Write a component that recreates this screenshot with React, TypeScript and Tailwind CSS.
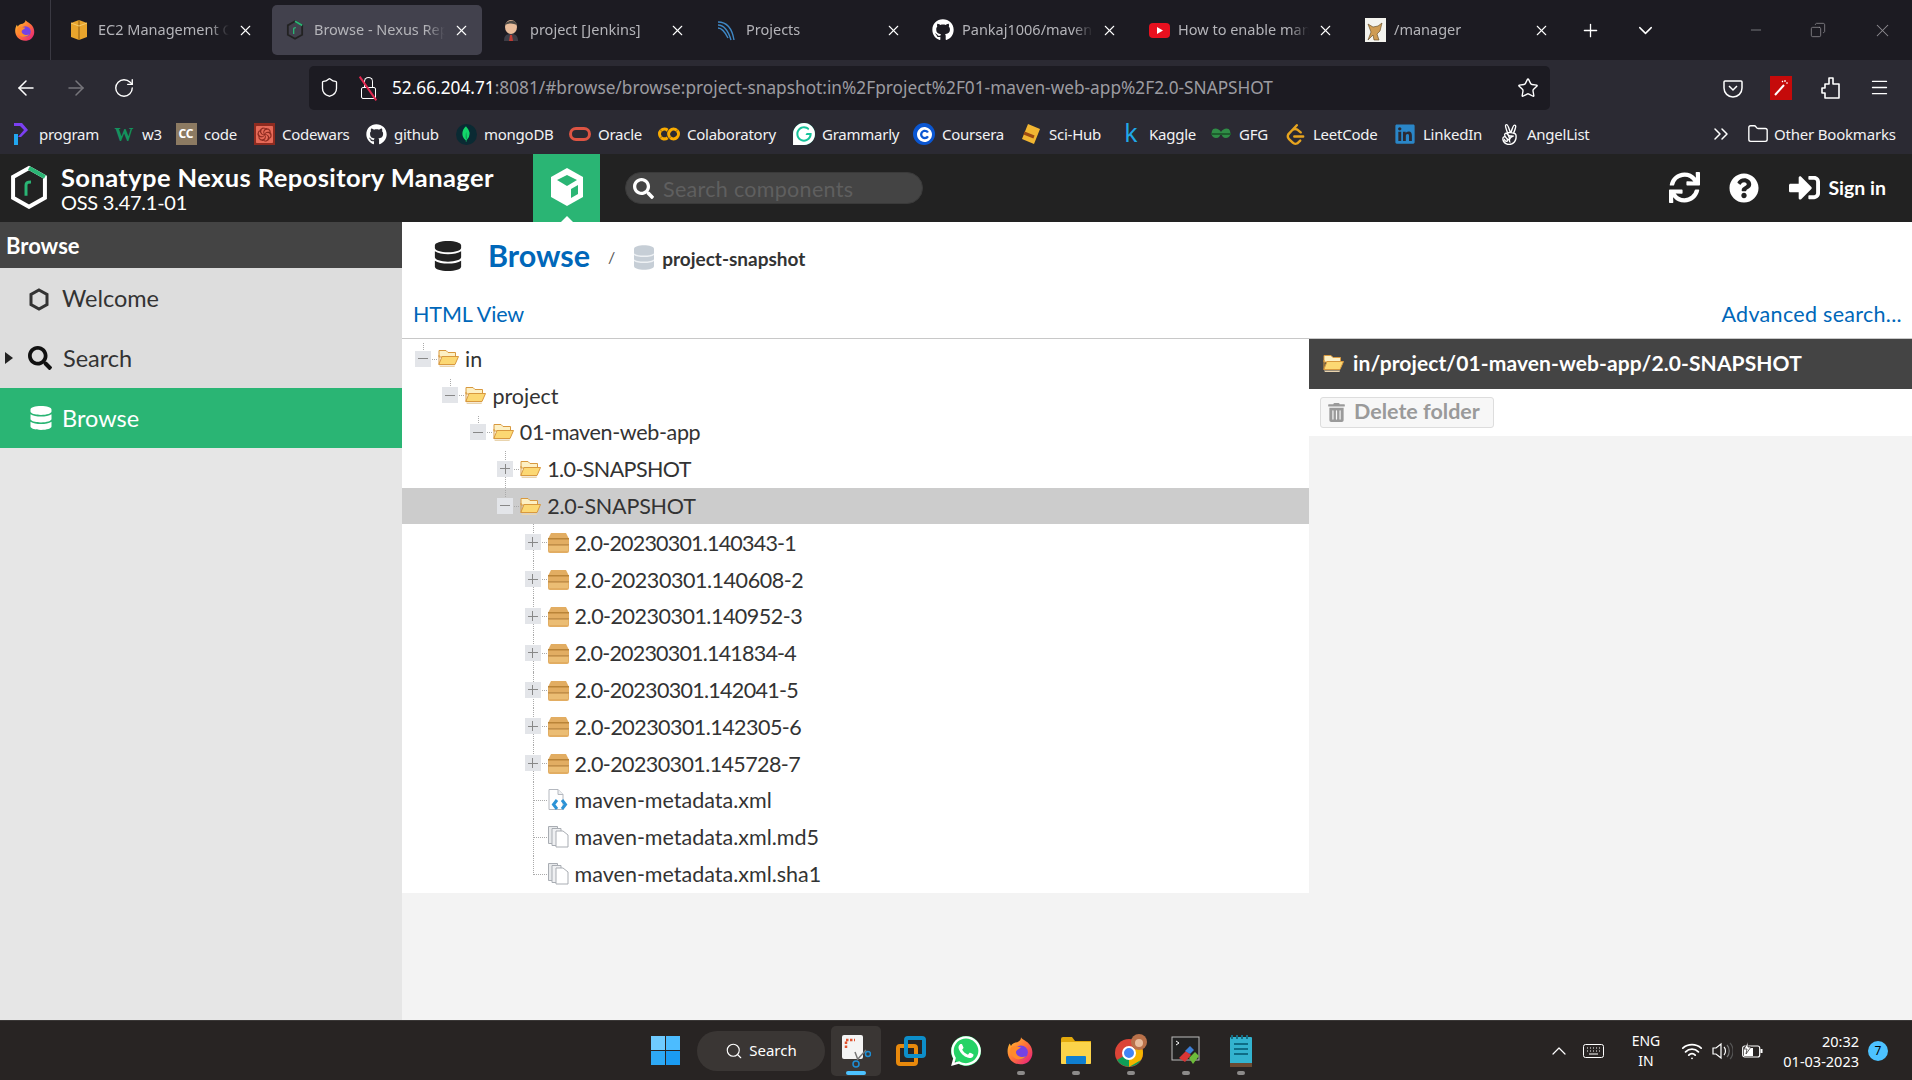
import React from 'react';
import {
  ArrowLeft, ArrowRight, RotateCw, Shield, Star, Menu, X, Plus, ChevronDown, Minus, Copy,
  ChevronsRight, Folder, Search as SearchIcon, ChevronUp, Wifi,
} from 'lucide-react';
import { FaDatabase, FaSync, FaQuestionCircle, FaSignInAlt, FaSearch, FaTrashAlt, FaGithub, FaLinkedin, FaAngellist, FaWhatsapp } from 'react-icons/fa';
import { SiMongodb, SiCoursera, SiLeetcode, SiGrammarly, SiCodewars, SiGooglecolab } from 'react-icons/si';

const uiFont = 'font-["Noto_Sans",sans-serif]';
const nxFont = 'font-["Lato",sans-serif]';

const NexusHex = ({ size = 24, stroke = '#fff', accent = '#2ab574' }: { size?: number; stroke?: string; accent?: string }) => (
  <svg width={size} height={size * 1.12} viewBox="0 0 40 45" fill="none">
    <path d="M20 3 L36 12 V33 L20 42 L4 33 V12 Z" stroke={stroke} strokeWidth="4" />
    <path d="M20 3 L36 12" stroke={accent} strokeWidth="4" />
    <path d="M17 31 V20 Q17 17 22 17" stroke={accent} strokeWidth="3" />
  </svg>
);

const FolderOpen = ({ size = 21 }: { size?: number }) => (
  <svg width={size} height={size} viewBox="0 2.500 21 18">
    <path d="M1 3.500h7l2 2h7.500V10H1z" fill="#fdf0c4" stroke="#d8993f" />
    <path d="M.8 17.500 L4 9.500 H20.500 L17 17.500z" fill="#fcd873" stroke="#d8993f" />
    <path d="M1 17.500V8" stroke="#d8993f" />
    <path d="M1 18.500h16l-.5 1.500H2z" fill="#e9d4ae" />
  </svg>
);

const PackageBox = () => (
  <svg width={21} height={21} viewBox="0 0 21 21">
    <path d="M3 1h15l3 6v12a2 2 0 0 1-2 2H2a2 2 0 0 1-2-2V7z" fill="#e2ad62" />
    <rect x="0" y="6" width="21" height="1.500" fill="#b98438" />
    <rect x="0" y="12" width="21" height="1.500" fill="#c2904a" />
    <rect x="1" y="14" width="19" height="5" fill="#ebbd74" />
  </svg>
);

const DocXml = () => (
  <svg width={21} height={22} viewBox="0 0 21 22">
    <path d="M1 .5h9l5 5v15H1z" fill="#fff" stroke="#b4b8bf" />
    <path d="M10 .5v5h5" fill="#eef0f2" stroke="#b4b8bf" />
    <path d="M9 11 L5.500 15.500 L9 20 M14 11 L17.500 15.500 L14 20" fill="none" stroke="#2d93d6" strokeWidth="3" />
  </svg>
);

const DocCopy = () => (
  <svg width={21} height={22} viewBox="0 0 21 22">
    <path d="M0.5 0.5h9v17h-9z" fill="#e8eaec" stroke="#a9adb3" />
    <path d="M4 2.500h9v17H4z" fill="#eff0f2" stroke="#a9adb3" />
    <path d="M8 5h7l5 4v12H8z" fill="#fff" stroke="#a9adb3" />
  </svg>
);

const FirefoxIcon = ({ size = 22 }: { size?: number }) => (
  <svg width={size} height={size} viewBox="0 0 24 24">
    <defs>
      <linearGradient id="ffg" x1="0" y1="0" x2="1" y2="1">
        <stop offset="0" stopColor="#ffcb2e" />
        <stop offset="0.5" stopColor="#ff7139" />
        <stop offset="1" stopColor="#e31587" />
      </linearGradient>
    </defs>
    <path d="M12 1c1 2 5 3 7 6 3 4 3 10-1 13.500-4 3-10 3-14-1C0 15 1 9 3 6l1 2c1-2 3-3 5-3 2-1 3-2 3-4z" fill="url(#ffg)" />
    <circle cx="12" cy="13" r="5.500" fill="#7542e5" />
    <path d="M4 9c3-2 5 0 8 0-2 2-4 2-4 4 0 3 5 5 8 3-2 3-8 4-11 0-2-2-2-5-1-7z" fill="#ff8a2b" />
  </svg>
);

const tabs = [
  { title: 'EC2 Management C', icon: <svg width={20} height={22} viewBox="0 0 20 22"><path d="M10 1l8 3v14l-8 3-8-3V4z" fill="#e9a52c" /><path d="M10 1v20" stroke="#8a5a12" /><path d="M2 4l8 3 8-3" fill="none" stroke="#f7cc6d" /></svg> },
  { title: 'Browse - Nexus Rep', active: true, icon: <NexusHex size={18} stroke="#222" /> },
  { title: 'project [Jenkins]', icon: <svg width={20} height={22} viewBox="0 0 20 22"><ellipse cx="10" cy="8" rx="6" ry="7" fill="#e9bd9c" /><path d="M4 6c1-5 11-6 12 0-4-2-8-2-12 0z" fill="#4d4a45" /><path d="M3 22c0-6 3-7 7-7s7 1 7 7z" fill="#3d3d46" /><path d="M9 16h2l1 6H8z" fill="#c13b33" /></svg> },
  { title: 'Projects', icon: <svg width={22} height={22} viewBox="0 0 22 22" fill="none" stroke="#3f88c5" strokeWidth="1.400"><path d="M2 3c8 0 14 6 16 18M2 6c6 0 10 5 13 15M2 9c4 0 7 4 10 10" /></svg> },
  { title: 'Pankaj1006/maven-', icon: <FaGithub size={22} className="text-white" /> },
  { title: 'How to enable man', icon: <svg width={21} height={21} viewBox="0 0 21 21"><rect x="0" y="3" width="21" height="15" rx="4" fill="#e8101f" /><path d="M8 7l6 3.500L8 14z" fill="#fff" /></svg> },
  { title: '/manager', icon: <svg width={21} height={24} viewBox="0 0 21 24"><rect width="21" height="24" fill="#f3f3ee" /><path d="M3 6l5 3 5-1 4-3-2 8-3 3 2 6H9l-1-5-5 5 3-8z" fill="#cf9c53" stroke="#5b4420" strokeWidth=".6" /></svg> },
];

const bookmarks = [
  { label: 'program', w: 'w-[103px]', icon: <svg width={18} height={24} viewBox="0 0 18 24"><path d="M2 1h8l6 7-7 7H6l6-7-4-4H2z" fill="#7b3ff2" /><path d="M2 12h4v11H2z" fill="#22a7f0" /></svg> },
  { label: 'w3', w: 'w-[62px]', icon: <span className="font-['Liberation_Serif',serif] text-[19px] font-bold text-[#13925e] leading-none">W</span> },
  { label: 'code', w: 'w-[78px]', icon: <span className="w-[21px] h-[22px] bg-[#8c7a62] text-white text-[12px] font-bold flex items-center justify-center leading-none">CC</span> },
  { label: 'Codewars', w: 'w-[112px]', icon: <span className="w-[21px] h-[22px] bg-[#8e2b20] flex items-center justify-center"><SiCodewars size={17} className="text-[#e66a58]" /></span> },
  { label: 'github', w: 'w-[90px]', icon: <FaGithub size={21} className="text-white" /> },
  { label: 'mongoDB', w: 'w-[114px]', icon: <span className="w-[21px] h-[21px] rounded-full bg-[#0a2a33] flex items-center justify-center"><SiMongodb size={16} className="text-[#13d66a]" /></span> },
  { label: 'Oracle', w: 'w-[89px]', icon: <span className="w-[22px] h-[14px] rounded-full border-[3px] border-[#dd5443]" /> },
  { label: 'Colaboratory', w: 'w-[135px]', icon: <SiGooglecolab size={22} className="text-[#f9ab00]" /> },
  { label: 'Grammarly', w: 'w-[120px]', icon: <span className="w-[22px] h-[22px] rounded-full bg-[#15c39a] flex items-center justify-center"><SiGrammarly size={22} className="text-white" /></span> },
  { label: 'Coursera', w: 'w-[107px]', icon: <span className="w-[22px] h-[22px] rounded-full bg-[#0a56d2] flex items-center justify-center"><SiCoursera size={15} className="text-white" /></span> },
  { label: 'Sci-Hub', w: 'w-[100px]', icon: <svg width={20} height={22} viewBox="0 0 20 22"><path d="M7 1l12 5-6 15L1 16z" fill="#f2b632" /><path d="M3 10l10 4" stroke="#9c4a12" strokeWidth="3" /></svg> },
  { label: 'Kaggle', w: 'w-[90px]', icon: <span className="text-[25px] leading-none text-[#20a8e8] -mt-[4px]">k</span> },
  { label: 'GFG', w: 'w-[74px]', icon: <svg width={20} height={14} viewBox="0 0 20 14" fill="#2f8d46"><path d="M10 5C8 1 2 0 1 4c-1 3 0 7 4 7 3 0 4-2 5-5 1 3 2 5 5 5 4 0 5-4 4-7-1-4-7-3-9 1z" /><path d="M0 6h20v2H0z" fill="#1d5e2d" /></svg> },
  { label: 'LeetCode', w: 'w-[110px]', icon: <SiLeetcode size={21} className="text-[#e7a41f]" /> },
  { label: 'LinkedIn', w: 'w-[104px]', icon: <FaLinkedin size={22} className="text-[#2a86c8]" /> },
  { label: 'AngelList', w: 'w-[211px]', icon: <FaAngellist size={21} className="text-white" /> },
];

type Line = 'top' | 'full' | 'end';
type Kind = 'folder' | 'package' | 'xml' | 'copy';

interface Node { label: string; depth: number; kind: Kind; toggle?: '+' | '-'; line: Line; selected?: boolean; track?: string }

const pkgs = [
  { id: '140343-1', track: 'tracking-[-0.8px]' },
  { id: '140608-2', track: 'tracking-[-0.45px]' },
  { id: '140952-3', track: 'tracking-[-0.5px]' },
  { id: '141834-4', track: 'tracking-[-0.8px]' },
  { id: '142041-5', track: 'tracking-[-0.7px]' },
  { id: '142305-6', track: 'tracking-[-0.55px]' },
  { id: '145728-7', track: 'tracking-[-0.6px]' },
];

const tree: Node[] = [
  { label: 'in', depth: 0, kind: 'folder', toggle: '-', line: 'top' },
  { label: 'project', depth: 1, kind: 'folder', toggle: '-', line: 'top' },
  { label: '01-maven-web-app', depth: 2, kind: 'folder', toggle: '-', line: 'top', track: 'tracking-[-0.35px]' },
  { label: '1.0-SNAPSHOT', depth: 3, kind: 'folder', toggle: '+', line: 'full', track: 'tracking-[-0.6px]' },
  { label: '2.0-SNAPSHOT', depth: 3, kind: 'folder', toggle: '-', line: 'top', selected: true, track: 'tracking-[-0.2px]' },
  ...pkgs.map((p): Node => ({ label: `2.0-20230301.${p.id}`, depth: 4, kind: 'package', toggle: '+', line: 'full', track: p.track })),
  { label: 'maven-metadata.xml', depth: 4, kind: 'xml', line: 'full' },
  { label: 'maven-metadata.xml.md5', depth: 4, kind: 'copy', line: 'full' },
  { label: 'maven-metadata.xml.sha1', depth: 4, kind: 'copy', line: 'end' },
];

const TreeRow = ({ node }: { node: Node }) => (
  <div
    className={`h-[36.8px] flex items-center text-[21.5px] text-[#333] ${node.selected ? 'bg-[#cccccc]' : ''}`}
    style={{ paddingLeft: 13 + 27.4 * node.depth }}
  >
    <div className="relative w-[23px] h-full shrink-0">
      {node.line === 'top' && <div className="absolute left-[8px] top-[2px] h-[9px] border-l border-dotted border-[#aaa]" />}
      {node.line === 'full' && <div className="absolute left-[8px] top-0 bottom-0 border-l border-dotted border-[#aaa]" />}
      {node.line === 'end' && <div className="absolute left-[8px] top-0 h-[19px] border-l border-dotted border-[#aaa]" />}
      <div className="absolute left-[8px] top-[18px] w-[14px] border-t border-dotted border-[#aaa]" />
      {node.toggle && (
        <div className="absolute left-0 top-[10px] w-[16px] h-[16px] bg-[#e3e5e9] flex items-center justify-center">
          <div className="relative w-[10px] h-[10px] flex items-center justify-center">
            <div className="absolute w-[10px] h-[1px] bg-[#888]" />
            {node.toggle === '+' && <div className="absolute w-[1px] h-[10px] bg-[#888]" />}
          </div>
        </div>
      )}
    </div>
    <div className="w-[27px] shrink-0 flex items-center">
      {node.kind === 'folder' && <FolderOpen />}
      {node.kind === 'package' && <PackageBox />}
      {node.kind === 'xml' && <DocXml />}
      {node.kind === 'copy' && <DocCopy />}
    </div>
    <span className={`whitespace-nowrap ${node.track ?? ''}`}>{node.label}</span>
  </div>
);

const TaskIcon = ({ children, dot }: { children: React.ReactNode; dot?: boolean }) => (
  <div className="relative w-[55px] h-[50px] flex items-center justify-center">
    {children}
    {dot && <div className="absolute bottom-[1px] w-[8px] h-[4px] rounded-full bg-[#8d8b8a]" />}
  </div>
);

export default function App() {
  return (
    <div className={`w-[1912px] h-[1080px] overflow-hidden flex flex-col bg-[#f2f2f2] ${uiFont}`}>
      {/* Tab strip */}
      <div className="h-[60px] bg-[#1c1b22] flex items-center shrink-0">
        <div className="w-[51px] h-full flex items-center justify-center border-r border-[#3a3942] shrink-0">
          <FirefoxIcon size={23} />
        </div>
        <div className="w-[5px]" />
        {tabs.map(t => (
          <div
            key={t.title}
            className={`w-[210px] mr-[6px] h-[50px] flex items-center pl-[12px] pr-[12px] gap-[8px] shrink-0 rounded-[5px] ${t.active ? 'bg-[#42414d]' : ''}`}
          >
            <div className="w-[22px] flex justify-center shrink-0">{t.icon}</div>
            <span className="flex-1 overflow-hidden whitespace-nowrap text-[14.5px] text-[#b4b4b9] [mask-image:linear-gradient(to_right,black_85%,transparent)]">{t.title}</span>
            <X size={17} className="text-white shrink-0" strokeWidth={1.5} />
          </div>
        ))}
        <div className="w-[12px]" />
        <Plus size={21} className="text-white shrink-0" strokeWidth={1.5} />
        <div className="w-[33px]" />
        <ChevronDown size={23} className="text-white shrink-0" strokeWidth={1.5} />
        <div className="flex-1" />
        <Minus size={16} className="text-[#8e8d92] shrink-0" strokeWidth={1.2} />
        <div className="w-[46px]" />
        <Copy size={16} className="text-[#8e8d92] shrink-0 -scale-x-100" strokeWidth={1.2} />
        <div className="w-[46px]" />
        <X size={21} className="text-[#8e8d92] shrink-0" strokeWidth={1.2} />
        <div className="w-[19px]" />
      </div>

      {/* Toolbar */}
      <div className="h-[94px] bg-[#2b2a33] shrink-0 flex flex-col">
        <div className="h-[54px] flex items-center pt-[1px]">
          <ArrowLeft size={24} strokeWidth={1.5} className="ml-[14px] text-white shrink-0" />
          <ArrowRight size={24} strokeWidth={1.5} className="ml-[26px] text-[#77767c] shrink-0" />
          <RotateCw size={22} strokeWidth={1.5} className="ml-[25px] text-white shrink-0" />
          <div className="ml-[174px] w-[1241px] h-[44px] bg-[#1c1b22] rounded-[5px] flex items-center pl-[10px] pr-[11px] shrink-0">
            <Shield size={21} strokeWidth={1.5} className="text-white shrink-0" />
            <div className="relative ml-[18px] w-[20px] h-[24px] shrink-0">
              <div className="absolute left-[3px] bottom-[1px] w-[15px] h-[12px] border-[1.5px] border-white rounded-[2px]" />
              <div className="absolute left-[6px] top-[1px] w-[9px] h-[10px] border-[1.5px] border-white rounded-t-full border-b-0" />
              <div className="absolute left-[9px] top-[-2px] w-[2px] h-[29px] bg-[#e22850] -rotate-[35deg]" />
            </div>
            <span className="ml-[14px] text-[17.25px] whitespace-nowrap text-[#9c9ca1]"><span className="text-white">52.66.204.71</span>:8081/#browse/browse:project-snapshot:in%2Fproject%2F01-maven-web-app%2F2.0-SNAPSHOT</span>
            <div className="flex-1" />
            <Star size={22} strokeWidth={1.5} className="text-white shrink-0" />
          </div>
          <svg className="ml-[173px] shrink-0" width={20} height={20} viewBox="0 0 20 20" fill="none" stroke="#fff" strokeWidth="1.500"><path d="M2 3h16a1 1 0 0 1 1 1v6a9 9 0 0 1-18 0V4a1 1 0 0 1 1-1z" /><path d="M6 8l4 4 4-4" /></svg>
          <div className="ml-[27px] w-[22px] h-[24px] bg-[#c50a0a] flex items-center justify-center shrink-0">
            <svg width={16} height={18} viewBox="0 0 16 18" fill="none" stroke="#fff" strokeWidth="2"><path d="M2 16L11 6" /><path d="M12 1v2M15 4h-2M9 2l1 1" strokeWidth="1.200" /></svg>
          </div>
          <svg className="ml-[28px] shrink-0" width={21} height={24} viewBox="0 0 21 24" fill="none" stroke="#fff" strokeWidth="1.600"><path d="M9 2h4v6h6v14H5v-5H2v-5h3V8h4z" strokeLinejoin="round" /></svg>
          <Menu size={21} strokeWidth={1.5} className="ml-[28px] text-white shrink-0" />
        </div>
        {/* Bookmarks */}
        <div className="h-[40px] flex items-center pl-[10px] text-[15px] text-[#f2f2f3]">
          {bookmarks.map(b => (
            <div key={b.label} className={`${b.w} shrink-0 flex items-center gap-[7px] whitespace-nowrap`}>
              <div className="w-[22px] flex justify-center shrink-0">{b.icon}</div>
              <span className="tracking-[-0.25px]">{b.label}</span>
            </div>
          ))}
          <ChevronsRight size={24} strokeWidth={1.5} className="text-white shrink-0" />
          <Folder size={22} strokeWidth={1.5} className="ml-[14px] text-white shrink-0" />
          <span className="ml-[5px] tracking-[-0.2px] whitespace-nowrap">Other Bookmarks</span>
        </div>
      </div>

      {/* Nexus header */}
      <div className={`h-[68px] bg-[#222222] flex items-center shrink-0 ${nxFont}`}>
        <div className="ml-[9px] -mt-[2px] shrink-0"><NexusHex size={40} /></div>
        <div className="ml-[12px] -mt-[3px] w-[472px] shrink-0 text-white">
          <div className="text-[25.5px] font-bold leading-[30px] whitespace-nowrap tracking-[0.4px]">Sonatype Nexus Repository Manager</div>
          <div className="text-[20px] leading-[20px] whitespace-nowrap tracking-[-0.25px]">OSS 3.47.1-01</div>
        </div>
        <div className="relative w-[67px] h-full bg-[#2ab574] flex items-center justify-center shrink-0">
          <svg width={34} height={40} viewBox="0 0 34 40" className="-mt-[3px]"><path d="M17 1l16 9v20L17 39 1 30V10z" fill="#fff" /><path d="M17 19l-10-6 10-5 10 5z" fill="#2ab574" /><path d="M21 22l7-4v9l-7 4z" fill="#2ab574" /></svg>
          <div className="absolute bottom-0 w-0 h-0 border-x-[6px] border-x-transparent border-b-[6px] border-b-white" />
        </div>
        <div className="ml-[25px] w-[298px] h-[32px] rounded-full bg-[#444444] border border-[#3a3a3a] flex items-center pl-[7px] shrink-0">
          <FaSearch size={21} className="text-white shrink-0" />
          <span className="ml-[9px] mt-[3px] text-[21.5px] text-[#5f5f5f] whitespace-nowrap tracking-[0.3px]">Search components</span>
        </div>
        <div className="flex-1" />
        <FaSync size={31} className="text-white shrink-0 -mt-[1px]" />
        <FaQuestionCircle size={30} className="ml-[29px] text-white shrink-0 -mt-[1px]" />
        <FaSignInAlt size={31} className="ml-[30px] text-white shrink-0 -mt-[1px]" />
        <span className="ml-[8px] mr-[26px] text-[19.5px] font-bold text-white whitespace-nowrap -mt-[1px]">Sign in</span>
      </div>

      {/* Body */}
      <div className={`flex-1 flex min-h-0 ${nxFont}`}>
        <div className="w-[402px] shrink-0 bg-[#e6e6e6] flex flex-col">
          <div className="h-[46px] bg-[#444444] text-white font-bold text-[22px] flex items-center pl-[6px]">Browse</div>
          <div className="h-[60px] bg-[#dddddd] flex items-center text-[23.5px] text-[#333]">
            <svg className="ml-[29px] mt-[2px]" width={20} height={23} viewBox="0 0 20 23" fill="none" stroke="#333" strokeWidth="3"><path d="M10 2l8 4.500v10L10 21l-8-4.500v-10z" /></svg>
            <span className="ml-[13px] mt-[1px]">Welcome</span>
          </div>
          <div className="h-[60px] bg-[#dddddd] flex items-center text-[23.5px] text-[#333] relative">
            <div className="absolute left-[5px] w-0 h-0 border-y-[6px] border-y-transparent border-l-[8px] border-l-[#222]" />
            <FaSearch size={24} className="ml-[28px] text-[#111]" />
            <span className="ml-[11px] mt-[1px]">Search</span>
          </div>
          <div className="h-[60px] bg-[#2ab574] flex items-center text-[23.5px] text-white">
            <FaDatabase size={24} className="ml-[29px]" />
            <span className="ml-[9px] mt-[1px]">Browse</span>
          </div>
        </div>

        <div className="flex-1 min-w-0 flex flex-col bg-[#f3f3f3]">
          <div className="h-[117px] bg-white border-b border-[#c8c8c8] shrink-0 flex flex-col">
            <div className="h-[68px] flex items-center pl-[31px]">
              <FaDatabase size={30} className="text-[#222]" />
              <span className="ml-[25px] text-[30.5px] font-bold text-[#0067b9]">Browse</span>
              <span className="ml-[18px] mt-[2px] text-[#555] text-[16px]">/</span>
              <svg className="ml-[19px] mt-[2px]" width={20} height={25} viewBox="0 0 20 25"><path d="M0 4c0-5 20-5 20 0v17c0 5-20 5-20 0z" fill="#c6ced6" /><path d="M0 9c3 3 17 3 20 0M0 15c3 3 17 3 20 0" fill="none" stroke="#eef1f4" strokeWidth="1.500" /></svg>
              <span className="ml-[8px] mt-[6px] text-[19px] font-bold text-[#333]">project-snapshot</span>
            </div>
            <div className="flex-1 flex items-start justify-between pl-[11px] pr-[10px] pt-[8px] text-[21.5px] text-[#0067b9] leading-[32px]">
              <span className="tracking-[-0.1px]">HTML View</span>
              <span className="tracking-[0.3px]">Advanced search...</span>
            </div>
          </div>
          <div className="flex-1 flex min-h-0">
            <div className="w-[907px] shrink-0">
              <div className="bg-white pt-[1.5px] pb-[1px]">
                {tree.map(n => <TreeRow key={n.label} node={n} />)}
              </div>
            </div>
            <div className="flex-1 min-w-0">
              <div className="h-[50px] bg-[#444444] flex items-center pb-[2px] pl-[14px] text-white">
                <FolderOpen size={21} />
                <span className="ml-[9px] text-[21px] font-bold whitespace-nowrap tracking-[0.1px]">in/project/01-maven-web-app/2.0-SNAPSHOT</span>
              </div>
              <div className="h-[47px] bg-white pl-[11px] pt-[8px]">
                <div className="w-[174px] h-[31px] border border-[#dddddd] bg-[#f7f7f7] rounded-[3px] flex items-center pl-[6px] pb-[2px]">
                  <FaTrashAlt size={19} className="text-[#9a9a9a] mt-[2px]" />
                  <span className="ml-[8px] text-[21.5px] font-bold text-[#9a9a9a] whitespace-nowrap">Delete folder</span>
                </div>
              </div>
            </div>
          </div>
        </div>
      </div>

      {/* Taskbar */}
      <div className={`h-[60px] bg-[#282423] border-t border-[#3a3736] shrink-0 flex items-center ${uiFont}`}>
        <div className="ml-[651px] w-[29px] h-[29px] grid grid-cols-2 gap-[1.5px] shrink-0">
          <div className="bg-[#6fcbff]" /><div className="bg-[#4cbcff]" /><div className="bg-[#2ea9f5]" /><div className="bg-[#1a9bf2]" />
        </div>
        <div className="ml-[17px] w-[128px] h-[40px] rounded-full bg-[#3a3634] flex items-center justify-center gap-[6px] shrink-0">
          <SearchIcon size={18} className="text-white" strokeWidth={1.5} />
          <span className="text-[15px] text-white">Search</span>
        </div>
        <div className="relative ml-[6px] w-[50px] h-[50px] rounded-[5px] bg-[#3a3634] flex items-center justify-center shrink-0">
          <svg width={30} height={34} viewBox="0 0 30 34"><rect x="1" y="1" width="21" height="24" rx="2" fill="#f4f4f4" /><path d="M5 14V6h9" fill="none" stroke="#e0522f" strokeWidth="2.500" strokeDasharray="2.500 1.500" /><path d="M14 18l3 8M25 16l-9 10" stroke="#777" strokeWidth="1.500" /><circle cx="15" cy="30" r="3" fill="none" stroke="#1e8fd5" strokeWidth="1.500" /><circle cx="27" cy="20" r="2.500" fill="none" stroke="#1e8fd5" strokeWidth="1.500" /></svg>
          <div className="absolute bottom-[1px] w-[20px] h-[4px] rounded-full bg-[#4cc2ff]" />
        </div>
        <div className="w-[2px] shrink-0" />
        <TaskIcon>
          <svg width={30} height={30} viewBox="0 0 30 30" fill="none"><rect x="2" y="10" width="18" height="18" rx="2" stroke="#e8890c" strokeWidth="4" /><rect x="10" y="2" width="18" height="18" rx="2" stroke="#0d8ec9" strokeWidth="4" /></svg>
        </TaskIcon>
        <TaskIcon>
          <span className="w-[30px] h-[30px] rounded-full bg-[#25d366] flex items-center justify-center"><FaWhatsapp size={34} className="text-white" /></span>
        </TaskIcon>
        <TaskIcon dot><FirefoxIcon size={30} /></TaskIcon>
        <TaskIcon dot>
          <svg width={30} height={27} viewBox="0 0 30 27"><path d="M0 2a2 2 0 0 1 2-2h9l3 4h16v21a2 2 0 0 1-2 2H2a2 2 0 0 1-2-2z" fill="#e3a90c" /><rect y="5" width="30" height="22" rx="1" fill="#fbd34a" /><rect x="5" y="19" width="20" height="8" rx="1" fill="#0f7fd1" /></svg>
        </TaskIcon>
        <TaskIcon dot>
          <svg width={32} height={34} viewBox="0 0 32 34">
            <circle cx="14" cy="19" r="14" fill="#db4437" />
            <path d="M14 19 L26 26 A14 14 0 0 1 2 26z" fill="#0f9d58" />
            <path d="M14 19 L26 12 A14 14 0 0 1 26 26 L14 33z" fill="#f4b400" />
            <circle cx="14" cy="19" r="6" fill="#4285f4" stroke="#fff" strokeWidth="2" />
            <circle cx="24" cy="8" r="8" fill="#b9714a" />
            <circle cx="24" cy="9" r="4" fill="#e8bd9e" />
          </svg>
        </TaskIcon>
        <TaskIcon dot>
          <svg width={30} height={30} viewBox="0 0 30 30"><rect x="1" y="1" width="27" height="23" fill="#222" stroke="#bbb" /><path d="M5 5l3 2-3 2" stroke="#fff" fill="none" /><path d="M8 22l7-7 5 4-6 7z" fill="#d93636" /><path d="M14 15l5-5 4 4-4 4z" fill="#3d7fd6" /><path d="M18 22l6-6 4 4-6 8z" fill="#6dbb3a" /></svg>
        </TaskIcon>
        <TaskIcon dot>
          <svg width={22} height={32} viewBox="0 0 22 32"><rect y="2" width="22" height="30" rx="1" fill="#33b3cf" /><rect y="28" width="22" height="4" fill="#6b4a32" /><path d="M4 9h14M4 14h14M4 19h14" stroke="#0e6d86" strokeWidth="2" /><path d="M2 0v4M7 0v4M12 0v4M17 0v4" stroke="#156e86" strokeWidth="2" /></svg>
        </TaskIcon>
        <div className="flex-1" />
        <ChevronUp size={24} strokeWidth={1.2} className="text-white shrink-0" />
        <svg className="ml-[12px] shrink-0" width={21} height={14} viewBox="0 0 21 14" fill="none" stroke="#fff"><rect x=".5" y=".5" width="20" height="13" rx="2" /><path d="M4 4h1M7 4h1M10 4h1M13 4h1M16 4h1M4 7h1M7 7h1M10 7h1M13 7h1M16 7h1M6 10h9" /></svg>
        <div className="ml-[20px] w-[44px] text-center text-[14px] leading-[20px] text-white shrink-0">ENG<br />IN</div>
        <Wifi size={22} strokeWidth={2} className="ml-[13px] text-white shrink-0" />
        <svg className="ml-[9px] shrink-0" width={21} height={18} viewBox="0 0 21 18" fill="none" stroke="#fff" strokeWidth="1.200"><path d="M1 6h3l5-4v14l-5-4H1z" /><path d="M12 5c2 2 2 6 0 8" /><path d="M15 3c3 3 3 9 0 12" stroke="#777" /><path d="M18 1c4 4 4 12 0 16" stroke="#555" /></svg>
        <svg className="ml-[9px] shrink-0" width={21} height={18} viewBox="0 0 21 18" fill="none"><rect x=".7" y="4" width="17" height="11" rx="2" stroke="#fff" strokeWidth="1.200" /><rect x="2" y="6" width="9" height="8" fill="#fff" /><rect x="18.500" y="7" width="2" height="4" fill="#fff" /><path d="M6 0L2 7h3l-1 5 5-7H6z" fill="#fff" stroke="#282423" strokeWidth=".7" /></svg>
        <div className="ml-[18px] w-[78px] text-right text-[14.5px] leading-[20px] text-white shrink-0 whitespace-nowrap">20:32<br />01-03-2023</div>
        <div className="ml-[9px] mr-[24px] w-[20px] h-[20px] rounded-full bg-[#4cc2ff] text-[12px] text-black flex items-center justify-center shrink-0">7</div>
      </div>
    </div>
  );
}
